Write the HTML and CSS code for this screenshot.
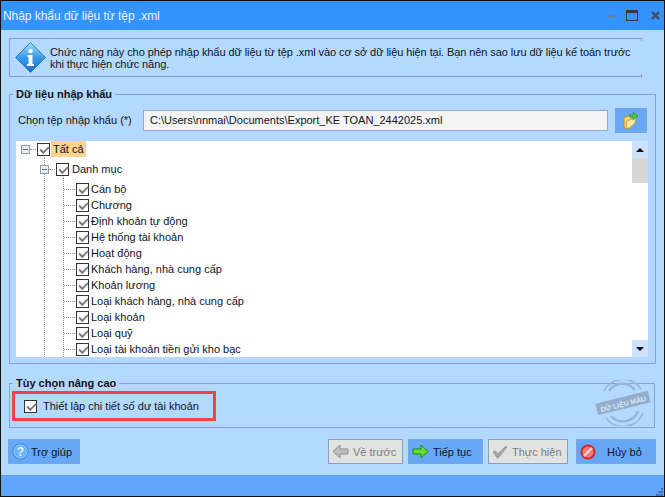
FILE: index.html
```html
<!DOCTYPE html>
<html lang="vi">
<head>
<meta charset="utf-8">
<title>Nhập khẩu dữ liệu từ tệp .xml</title>
<link rel="stylesheet" href="styles.css">
</head>
<body>
<div class="window">
  <header class="titlebar">
    <span class="title">Nhập khẩu dữ liệu từ tệp .xml</span>
    <div class="winctl">
      <span class="ctl-min"></span>
      <span class="ctl-max"></span>
      <svg class="ctl-close" width="9" height="9" viewBox="0 0 9 9"><path d="M1 1l7 7M8 1l-7 7" stroke="#3f4a55" stroke-width="2.2"/></svg>
    </div>
  </header>
  <main class="content">
    <section class="info">
      <svg class="info-icon" width="31" height="31" viewBox="0 0 31 31">
        <defs><linearGradient id="ig" x1="0" y1="0" x2="0" y2="1"><stop offset="0" stop-color="#a9dcf8"/><stop offset=".5" stop-color="#3a9be6"/><stop offset="1" stop-color="#1b6fc9"/></linearGradient></defs>
        <path d="M15.500 .5L30.500 15.500 15.500 30.500 .5 15.500z" fill="url(#ig)" stroke="#2a7fd0" stroke-linejoin="round"/>
        <circle cx="15.500" cy="9" r="2.200" fill="#fff"/>
        <path d="M12.500 13h5v9h1.500v2h-7v-2h1.500v-7h-1z" fill="#fff"/>
      </svg>
      <p class="info-text">Chức năng này cho phép nhập khẩu dữ liệu từ tệp .xml vào cơ sở dữ liệu hiện tại. Bạn nên sao lưu dữ liệu kế toán trước<br>khi thực hiện chức năng.</p>
    </section>

    <fieldset class="group group-data">
      <legend>Dữ liệu nhập khẩu</legend>
      <div class="file-row">
        <label class="file-label">Chọn tệp nhập khẩu (*)</label>
        <div class="file-input">C:\Users\nnmai\Documents\Export_KE TOAN_2442025.xml</div>
        <button class="file-btn" type="button" aria-label="Chọn tệp">
          <svg width="16" height="18" viewBox="0 0 16 18">
            <path d="M1 6.500l6-2 5 1.500v6l-6 5.500H2.500L1 16z" fill="#f6cf6b" stroke="#b98a2c" stroke-width=".8"/>
            <path d="M3 17l1-7 9-3.500-1 5.500-5.500 5z" fill="#fde9a6" stroke="#c99a3a" stroke-width=".8"/>
            <path d="M6 4h4V1l5 4-5 4V6.500L7.500 7z" fill="#4cc23f" stroke="#2d8f29" stroke-width=".6"/>
          </svg>
        </button>
      </div>
      <div class="tree">
        <div class="tree-body">
          <div class="row row-root">
            <span class="expander"></span><span class="dots"></span>
            <span class="check"></span><span class="label label-sel">Tất cả</span>
          </div>
          <div class="branch branch-root">
            <div class="row row-cat">
              <span class="expander"></span><span class="dots"></span>
              <span class="check"></span><span class="label">Danh mục</span>
            </div>
            <div class="branch branch-cat">
              <div class="row leaf"><span class="dots"></span><span class="check"></span><span class="label">Cán bộ</span></div>
              <div class="row leaf"><span class="dots"></span><span class="check"></span><span class="label">Chương</span></div>
              <div class="row leaf"><span class="dots"></span><span class="check"></span><span class="label">Định khoản tự động</span></div>
              <div class="row leaf"><span class="dots"></span><span class="check"></span><span class="label">Hệ thống tài khoản</span></div>
              <div class="row leaf"><span class="dots"></span><span class="check"></span><span class="label">Hoạt động</span></div>
              <div class="row leaf"><span class="dots"></span><span class="check"></span><span class="label">Khách hàng, nhà cung cấp</span></div>
              <div class="row leaf"><span class="dots"></span><span class="check"></span><span class="label">Khoản lương</span></div>
              <div class="row leaf"><span class="dots"></span><span class="check"></span><span class="label">Loại khách hàng, nhà cung cấp</span></div>
              <div class="row leaf"><span class="dots"></span><span class="check"></span><span class="label">Loại khoản</span></div>
              <div class="row leaf"><span class="dots"></span><span class="check"></span><span class="label">Loại quỹ</span></div>
              <div class="row leaf"><span class="dots"></span><span class="check"></span><span class="label">Loại tài khoản tiền gửi kho bạc</span></div>
            </div>
          </div>
        </div>
        <div class="scrollbar">
          <span class="arrow"><i class="tri-up"></i></span>
          <span class="thumb"></span>
          <span class="track"></span>
          <span class="arrow"><i class="tri-down"></i></span>
        </div>
      </div>
    </fieldset>

    <fieldset class="group group-adv">
      <legend>Tùy chọn nâng cao</legend>
      <div class="highlight">
        <span class="check"></span><span class="adv-label">Thiết lập chi tiết số dư tài khoản</span>
      </div>
      <svg class="stamp" width="56" height="46" viewBox="0 0 56 46" aria-hidden="true">
        <g fill="none" stroke="#97b5d6" stroke-width="1.600">
          <path d="M9 11A21.500 21.500 0 0 1 46 9"/>
          <path d="M48 33A21.500 21.500 0 0 1 11 38"/>
          <path d="M14 11A16 16 0 0 1 40 10" stroke-width="2.400"/>
          <path d="M43 31A16 16 0 0 1 16 36" stroke-width="2.400"/>
        </g>
        <g transform="rotate(-14 28 23)">
          <rect x="1" y="17" width="54" height="12" fill="#93aecb"/>
          <text x="28" y="26.500" text-anchor="middle" class="stamp-text">DỮ LIỆU MẪU</text>
        </g>
      </svg>
    </fieldset>

    <div class="actions">
      <button class="btn btn-help" type="button">
        <svg width="17" height="17" viewBox="0 0 17 17"><circle cx="8.500" cy="8.500" r="7.600" fill="#70b3f6" stroke="#2f86e0"/><circle cx="8.500" cy="8.500" r="6.600" fill="none" stroke="#a8d2fb" stroke-width=".6"/><text x="8.500" y="13" text-anchor="middle" class="q">?</text></svg>
        <span>Trợ giúp</span>
      </button>
      <div class="spacer"></div>
      <button class="btn btn-off btn-back" type="button">
        <svg width="17" height="15" viewBox="0 0 17 15"><path d="M8 1L1 7.500 8 14v-4h8V5H8z" fill="#bdbdbd" stroke="#8c8c8c" stroke-linejoin="round"/></svg>
        <span>Về trước</span>
      </button>
      <button class="btn btn-next" type="button">
        <svg width="17" height="15" viewBox="0 0 17 15"><path d="M9 1l7 6.500L9 14v-4H1V5h8z" fill="#62dc30" stroke="#1c8a1c" stroke-linejoin="round"/></svg>
        <span>Tiếp tục</span>
      </button>
      <button class="btn btn-off btn-run" type="button">
        <svg width="16" height="14" viewBox="0 0 16 14"><path d="M1 7l2-1.500 3 3L14 1l1 1-8.500 11H5z" fill="#a4a4a4" stroke="#8d8d8d" stroke-width=".5"/></svg>
        <span>Thực hiện</span>
      </button>
      <button class="btn btn-cancel" type="button">
        <svg width="16" height="16" viewBox="0 0 16 16"><circle cx="8" cy="8" r="6.600" fill="#f07a7a" stroke="#d8232c" stroke-width="2"/><path d="M4 12l8-8" stroke="#ffd7d7" stroke-width="2"/></svg>
        <span class="cancel-text">Hủy bỏ</span>
      </button>
    </div>
  </main>
  <footer class="statusbar">
    <svg class="grip" width="8" height="8" viewBox="0 0 8 8"><path d="M5 0h2v2H5zM2.500 3h2v2h-2zM5 3h2v2H5zM0 6h2v2H0zM2.500 6h2v2h-2zM5 6h2v2H5z" fill="#3a70b5"/></svg>
  </footer>
</div>
</body>
</html>
```

FILE: styles.css
```css
* { box-sizing: border-box; }
html, body { margin: 0; padding: 0; }
body {
  width: 665px;
  height: 497px;
  overflow: hidden;
  font-family: "Liberation Sans", Arial, sans-serif;
  font-size: 11px;
  color: #10141a;
}
.window {
  width: 665px;
  height: 497px;
  border: 1px solid #111;
  background: #b4d9ff;
  display: flex;
  flex-direction: column;
}
.titlebar {
  height: 29px;
  flex: none;
  background: #3394ff;
  display: flex;
  align-items: center;
  padding-left: 2px;
  padding-right: 4px;
}
.title { font-size: 12px; color: #e8f2fc; flex: 1; letter-spacing: -0.05px; }
.winctl { display: flex; align-items: center; }
.ctl-min { width: 8px; height: 2px; background: #6d8094; margin-right: 10px; }
.ctl-max { width: 12px; height: 11px; border: 1px solid #2f3a46; border-top-width: 3px; margin-right: 13px; }
.ctl-close { display: block; }
.content {
  flex: 1;
  display: flex;
  flex-direction: column;
  padding: 8px 8px 0;
  min-height: 0;
}
.info {
  width: 633px;
  height: 39px;
  border: 1px solid #7f9fd0;
  border-right: 0;
  background:
    linear-gradient(#7f9fd0, #7f9fd0) right top / 1px 2px no-repeat,
    linear-gradient(#7f9fd0, #7f9fd0) right bottom / 1px 2px no-repeat;
  display: flex;
  align-items: center;
  padding-left: 5px;
  flex: none;
}
.info-icon { flex: none; display: block; margin-right: 4px; }
.info-text { margin: 0; line-height: 12px; white-space: nowrap; letter-spacing: -0.08px; }
.group {
  margin: 0;
  padding: 0;
  border: 1px solid #82a4d6;
  min-width: 0;
  flex: none;
}
.group legend {
  font-weight: bold;
  font-size: 11px;
  line-height: 14px;
  padding: 0 3px;
}
.group-data {
  margin-top: 10px;
  width: 647px;
  height: 277px;
  padding: 0 6px;
}
.group-data legend { margin-left: -3px; }
.file-row { display: flex; align-items: center; height: 26px; margin-top: 6px; }
.file-label { width: 127px; padding-left: 2px; flex: none; white-space: nowrap; }
.file-input {
  width: 465px;
  height: 21px;
  border: 1px solid #98a6dc;
  background: #f4f4f4;
  padding-left: 6px;
  line-height: 19px;
  flex: none;
  white-space: nowrap;
}
.file-btn {
  margin: 0 0 0 7px;
  padding: 0;
  width: 32px;
  height: 25px;
  background: #66a8f5;
  border: 1px solid #7aa6dc;
  display: flex;
  align-items: center;
  justify-content: center;
  flex: none;
}
.tree {
  margin-top: 8px;
  width: 632px;
  height: 216px;
  background: #fff;
  display: flex;
  overflow: hidden;
}
.tree-body { flex: 1; overflow: hidden; }
.row { display: flex; align-items: center; height: 16px; white-space: nowrap; }
.row-root { padding-left: 5px; }
.expander {
  width: 9px;
  height: 9px;
  border: 1px solid #8e9aa8;
  background: #e8edf3;
  position: relative;
  flex: none;
}
.expander::after {
  content: "";
  position: absolute;
  left: 1px;
  top: 3px;
  width: 5px;
  height: 1px;
  background: #53708f;
}
.dots { width: 6px; border-top: 1px dotted #9a9a9a; flex: none; }
.check {
  width: 13px;
  height: 13px;
  border: 1px solid #333;
  background: #fff;
  flex: none;
  position: relative;
  margin: 0 1px;
}
.check::after {
  content: "";
  position: absolute;
  left: 2px;
  top: 2px;
  width: 7px;
  height: 4px;
  border-left: 2px solid #777;
  border-bottom: 2px solid #777;
  transform: rotate(-45deg) scale(1, .9);
}
.label { padding: 0 2px; line-height: 16px; }
.label-sel { background: #ffd391; }
.leaf .label { padding-left: 1px; }
.branch-root {
  margin-left: 28px;
  padding-top: 4px;
  border-left: 1px dotted #9a9a9a;
}
.row-cat { margin-left: -5px; }
.branch-cat {
  margin-left: 18px;
  padding-top: 4px;
  border-left: 1px dotted #9a9a9a;
}
.leaf .dots { width: 11px; }
.scrollbar {
  width: 16px;
  flex: none;
  display: flex;
  flex-direction: column;
  background: #fff;
}
.arrow { height: 17px; background: #cde2fa; display: flex; align-items: center; justify-content: center; flex: none; }
.thumb { height: 25px; background: #d6d6d6; flex: none; }
.track { flex: 1; background: #fff; }
.tri-up { width: 0; height: 0; border: 4px solid transparent; border-top: 0; border-bottom: 4px solid #000; }
.tri-down { width: 0; height: 0; border: 4px solid transparent; border-bottom: 0; border-top: 4px solid #000; }
.group-adv {
  margin-top: 12px;
  width: 646px;
  height: 52px;
  padding: 0 0 0 2px;
  position: relative;
}
.group-adv legend { margin-left: 1px; }
.highlight {
  width: 204px;
  height: 30px;
  margin-top: 1px;
  border: 3px solid #ef4349;
  display: flex;
  align-items: center;
  padding-left: 8px;
  white-space: nowrap;
}
.adv-label { margin-left: 5px; }
.stamp { position: absolute; right: 3px; top: -10px; display: block; }
.stamp-text {
  font: bold 7px "Liberation Sans", Arial, sans-serif;
  fill: #dce7f3;
}
.actions { display: flex; margin-top: 11px; height: 25px; flex: none; }
.spacer { flex: 1; }
.btn {
  height: 25px;
  margin: 0;
  padding: 0 3px;
  border: 1px solid #7aa6dc;
  background: #66a8f5;
  font: 11px "Liberation Sans", Arial, sans-serif;
  color: #10141a;
  display: flex;
  align-items: center;
  gap: 4px;
  flex: none;
  white-space: nowrap;
}
.btn svg { flex: none; display: block; }
.q { font: bold 12px "Liberation Sans", Arial, sans-serif; fill: #e6f2ff; }
.btn-help { width: 72px; margin-left: -1px; gap: 2px; }
.btn-back { width: 75px; }
.btn-next { width: 75px; margin-left: 5px; }
.btn-run { width: 80px; margin-left: 5px; }
.btn-cancel { width: 80px; margin-left: 8px; }
.btn-off { background: #e2e2e2; border-color: #87a0bc; color: #7d7d7d; }
.cancel-text { margin-left: 7px; }
.statusbar {
  height: 21px;
  flex: none;
  background: #60a5fb;
  display: flex;
  justify-content: flex-end;
  align-items: flex-end;
}
.grip { display: block; }
```
